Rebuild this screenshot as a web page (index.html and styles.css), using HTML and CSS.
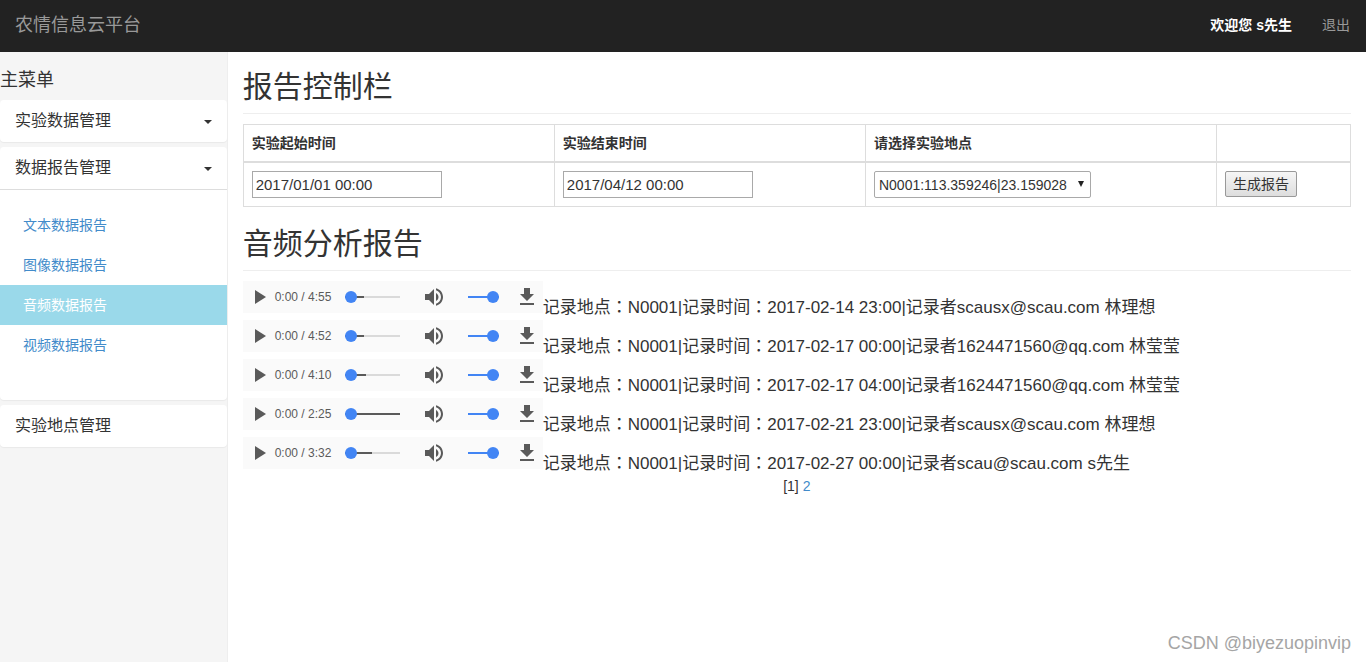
FILE: index.html
```html
<!DOCTYPE html>
<html lang="zh-CN">
<head>
<meta charset="utf-8">
<title>农情信息云平台</title>
<link rel="stylesheet" href="styles.css">
</head>
<body>
<svg class="sprite" aria-hidden="true">
  <symbol id="play" viewBox="0 0 24 24"><path d="M8 5v14l11-7z"/></symbol>
  <symbol id="volume" viewBox="0 0 24 24"><path d="M3 9v6h4l5 5V4L7 9H3zm13.500 3c0-1.770-1.020-3.290-2.500-4.030v8.050c1.480-.73 2.500-2.250 2.500-4.020zM14 3.230v2.060c2.890.86 5 3.540 5 6.710s-2.110 5.850-5 6.710v2.060c4.010-.91 7-4.490 7-8.770s-2.990-7.860-7-8.770z"/></symbol>
  <symbol id="download" viewBox="0 0 24 24"><path d="M19 9h-4V3H9v6H5l7 7 7-7zM5 18v2h14v-2H5z"/></symbol>
</svg>

<header class="navbar">
  <a class="brand" href="#">农情信息云平台</a>
  <nav class="nav-right">
    <strong class="welcome">欢迎您 s先生</strong>
    <a class="logout" href="#">退出</a>
  </nav>
</header>

<div class="layout">
  <aside class="sidebar">
    <h2 class="menu-title">主菜单</h2>
    <section class="panel">
      <button class="panel-head" type="button">实验数据管理<span class="caret"></span></button>
    </section>
    <section class="panel">
      <button class="panel-head" type="button">数据报告管理<span class="caret"></span></button>
      <ul class="submenu">
        <li><a class="sublink" href="#">文本数据报告</a></li>
        <li><a class="sublink" href="#">图像数据报告</a></li>
        <li><a class="sublink active" href="#">音频数据报告</a></li>
        <li><a class="sublink" href="#">视频数据报告</a></li>
      </ul>
    </section>
    <section class="panel">
      <button class="panel-head" type="button">实验地点管理</button>
    </section>
  </aside>

  <main class="content">
    <h1 class="page-title">报告控制栏</h1>
    <table class="controls">
      <colgroup><col class="col-date"><col class="col-date"><col class="col-place"><col></colgroup>
      <thead>
        <tr>
          <th><label for="start">实验起始时间</label></th>
          <th><label for="end">实验结束时间</label></th>
          <th><label for="place">请选择实验地点</label></th>
          <th></th>
        </tr>
      </thead>
      <tbody>
        <tr>
          <td><input class="date" id="start" type="text" value="2017/01/01 00:00"></td>
          <td><input class="date" id="end" type="text" value="2017/04/12 00:00"></td>
          <td><span class="select-wrap"><select class="place" id="place"><option>N0001:113.359246|23.159028</option></select></span></td>
          <td><button class="generate" type="button">生成报告</button></td>
        </tr>
      </tbody>
    </table>

    <h1 class="page-title">音频分析报告</h1>
    <ul class="records">
      <li class="record">
        <div class="player">
          <button class="icon-btn" type="button" aria-label="播放"><svg class="icon"><use href="#play"/></svg></button>
          <span class="time">0:00 / 4:55</span>
          <input class="slider seek" style="--loaded:35%" type="range" value="0" aria-label="进度">
          <button class="icon-btn" type="button" aria-label="静音"><svg class="icon"><use href="#volume"/></svg></button>
          <input class="slider volume" type="range" value="100" aria-label="音量">
          <button class="icon-btn" type="button" aria-label="下载"><svg class="icon"><use href="#download"/></svg></button>
        </div>
        <span class="info">记录地点<span class="colon" lang="ja">：</span>N0001|记录时间<span class="colon" lang="ja">：</span>2017-02-14 23:00|记录者scausx@scau.com 林理想</span>
      </li>
      <li class="record">
        <div class="player">
          <button class="icon-btn" type="button" aria-label="播放"><svg class="icon"><use href="#play"/></svg></button>
          <span class="time">0:00 / 4:52</span>
          <input class="slider seek" style="--loaded:35%" type="range" value="0" aria-label="进度">
          <button class="icon-btn" type="button" aria-label="静音"><svg class="icon"><use href="#volume"/></svg></button>
          <input class="slider volume" type="range" value="100" aria-label="音量">
          <button class="icon-btn" type="button" aria-label="下载"><svg class="icon"><use href="#download"/></svg></button>
        </div>
        <span class="info">记录地点<span class="colon" lang="ja">：</span>N0001|记录时间<span class="colon" lang="ja">：</span>2017-02-17 00:00|记录者1624471560@qq.com 林莹莹</span>
      </li>
      <li class="record">
        <div class="player">
          <button class="icon-btn" type="button" aria-label="播放"><svg class="icon"><use href="#play"/></svg></button>
          <span class="time">0:00 / 4:10</span>
          <input class="slider seek" style="--loaded:38%" type="range" value="0" aria-label="进度">
          <button class="icon-btn" type="button" aria-label="静音"><svg class="icon"><use href="#volume"/></svg></button>
          <input class="slider volume" type="range" value="100" aria-label="音量">
          <button class="icon-btn" type="button" aria-label="下载"><svg class="icon"><use href="#download"/></svg></button>
        </div>
        <span class="info">记录地点<span class="colon" lang="ja">：</span>N0001|记录时间<span class="colon" lang="ja">：</span>2017-02-17 04:00|记录者1624471560@qq.com 林莹莹</span>
      </li>
      <li class="record">
        <div class="player">
          <button class="icon-btn" type="button" aria-label="播放"><svg class="icon"><use href="#play"/></svg></button>
          <span class="time">0:00 / 2:25</span>
          <input class="slider seek" style="--loaded:100%" type="range" value="0" aria-label="进度">
          <button class="icon-btn" type="button" aria-label="静音"><svg class="icon"><use href="#volume"/></svg></button>
          <input class="slider volume" type="range" value="100" aria-label="音量">
          <button class="icon-btn" type="button" aria-label="下载"><svg class="icon"><use href="#download"/></svg></button>
        </div>
        <span class="info">记录地点<span class="colon" lang="ja">：</span>N0001|记录时间<span class="colon" lang="ja">：</span>2017-02-21 23:00|记录者scausx@scau.com 林理想</span>
      </li>
      <li class="record">
        <div class="player">
          <button class="icon-btn" type="button" aria-label="播放"><svg class="icon"><use href="#play"/></svg></button>
          <span class="time">0:00 / 3:32</span>
          <input class="slider seek" style="--loaded:49%" type="range" value="0" aria-label="进度">
          <button class="icon-btn" type="button" aria-label="静音"><svg class="icon"><use href="#volume"/></svg></button>
          <input class="slider volume" type="range" value="100" aria-label="音量">
          <button class="icon-btn" type="button" aria-label="下载"><svg class="icon"><use href="#download"/></svg></button>
        </div>
        <span class="info">记录地点<span class="colon" lang="ja">：</span>N0001|记录时间<span class="colon" lang="ja">：</span>2017-02-27 00:00|记录者scau@scau.com s先生</span>
      </li>
    </ul>
    <nav class="pager">[1] <a href="#">2</a></nav>
  </main>
</div>
<div class="watermark">CSDN @biyezuopinvip</div>
</body>
</html>
```
FILE: styles.css
```css
*, *::before, *::after { box-sizing: border-box; }

body {
  margin: 0;
  min-height: 100vh;
  display: flex;
  flex-direction: column;
  font: 14px/20px "Liberation Sans", "Noto Sans CJK SC", sans-serif;
  color: #333;
  background: #fff;
}

a { color: #428bca; text-decoration: none; }
ul { list-style: none; margin: 0; padding: 0; }
button, input, select { font: inherit; color: inherit; margin: 0; }
.sprite { display: none; }

.navbar {
  display: flex;
  align-items: center;
  justify-content: space-between;
  height: 52px;
  padding: 0 16px 2px 15px;
  background: #222;
}
.brand { font-size: 18px; color: #999; }
.nav-right { display: flex; gap: 30px; }
.welcome { color: #fff; }
.logout { color: #999; }

.layout { flex: 1; display: flex; }

.sidebar {
  flex: 0 0 16.6667%;
  padding-top: 18px;
  background: #f5f5f5;
  border-right: 1px solid #eee;
}
.menu-title { margin: 0 0 10px; font-size: 18px; font-weight: 400; line-height: 20px; }
.panel {
  margin-bottom: 5px;
  background: #fff;
  border-radius: 4px;
  box-shadow: 0 1px 1px rgba(0, 0, 0, .05);
}
.panel-head {
  display: flex;
  align-items: center;
  justify-content: space-between;
  width: 100%;
  height: 42px;
  padding: 0 15px;
  border: 0;
  background: none;
  font-size: 16px;
  text-align: left;
}
.caret {
  margin-top: 2px;
  border-top: 4px solid #333;
  border-left: 4px solid transparent;
  border-right: 4px solid transparent;
}
.submenu { padding: 15px 0 35px; border-top: 1px solid #ddd; }
.sublink { display: block; padding: 10px 23px; }
.sublink.active { background: #9ad9ea; color: #fff; }

.content { flex: 1; min-width: 0; padding: 15px 15px 0; }
.page-title {
  margin: 0 0 10px;
  padding-bottom: 7px;
  border-bottom: 1px solid #eee;
  font-size: 30px;
  font-weight: 400;
  line-height: 39px;
}

.controls {
  width: 100%;
  margin-bottom: 17px;
  border-collapse: collapse;
  table-layout: fixed;
}
.col-date { width: 28.1%; }
.col-place { width: 31.7%; }
.controls th, .controls td { padding: 8px; border: 1px solid #ddd; text-align: left; vertical-align: top; }
.controls th { border-bottom-width: 2px; }
.controls td { height: 44px; }
.date {
  display: block;
  width: 190px;
  height: 27px;
  padding: 1px 3px;
  border: 1px solid #a9a9a9;
  font-size: 15px;
}
.select-wrap { position: relative; display: block; width: 217px; }
.select-wrap::after {
  content: "";
  position: absolute;
  top: 10px;
  right: 7px;
  border-top: 6px solid #222;
  border-left: 3px solid transparent;
  border-right: 3px solid transparent;
  pointer-events: none;
}
.place {
  display: block;
  width: 100%;
  height: 27px;
  padding: 0 4px;
  border: 1px solid #a9a9a9;
  border-radius: 2px;
  background: #fff;
  appearance: none;
}
.generate {
  display: block;
  height: 26px;
  padding: 0 7px;
  border: 1px solid #999;
  border-radius: 2px;
  background: linear-gradient(#f6f6f6, #ddd);
}

.record { display: flex; align-items: flex-start; min-height: 39px; }
.player {
  flex: none;
  display: flex;
  align-items: center;
  width: 300px;
  height: 32px;
  padding: 0 4px;
  background: #fafafa;
}
.icon-btn { width: 24px; height: 24px; padding: 0; border: 0; background: none; color: #5a5a5a; }
.icon { display: block; width: 24px; height: 24px; fill: currentColor; }
.time { width: 74px; padding-left: 4px; font-size: 12px; color: #5a5a5a; white-space: nowrap; }
.slider { height: 12px; background: none; appearance: none; }
.slider::-webkit-slider-runnable-track { height: 2px; background: #4285f4; }
.slider::-webkit-slider-thumb {
  width: 12px;
  height: 12px;
  margin-top: -5px;
  border-radius: 50%;
  background: #4285f4;
  appearance: none;
}
.seek { width: 55px; margin-right: 22px; }
.seek::-webkit-slider-runnable-track {
  background: linear-gradient(90deg, #5a5a5a var(--loaded), #dadada var(--loaded));
}
.volume { width: 31px; margin: 0 16px 0 22px; }
.info { margin-top: 17px; font-size: 17px; }
.colon { font-family: "Noto Sans CJK JP", sans-serif; line-height: 1px; }
.pager { text-align: center; }

.watermark {
  position: absolute;
  right: 15px;
  bottom: 9px;
  font-size: 18px;
  color: #a5a5a5;
}
```
